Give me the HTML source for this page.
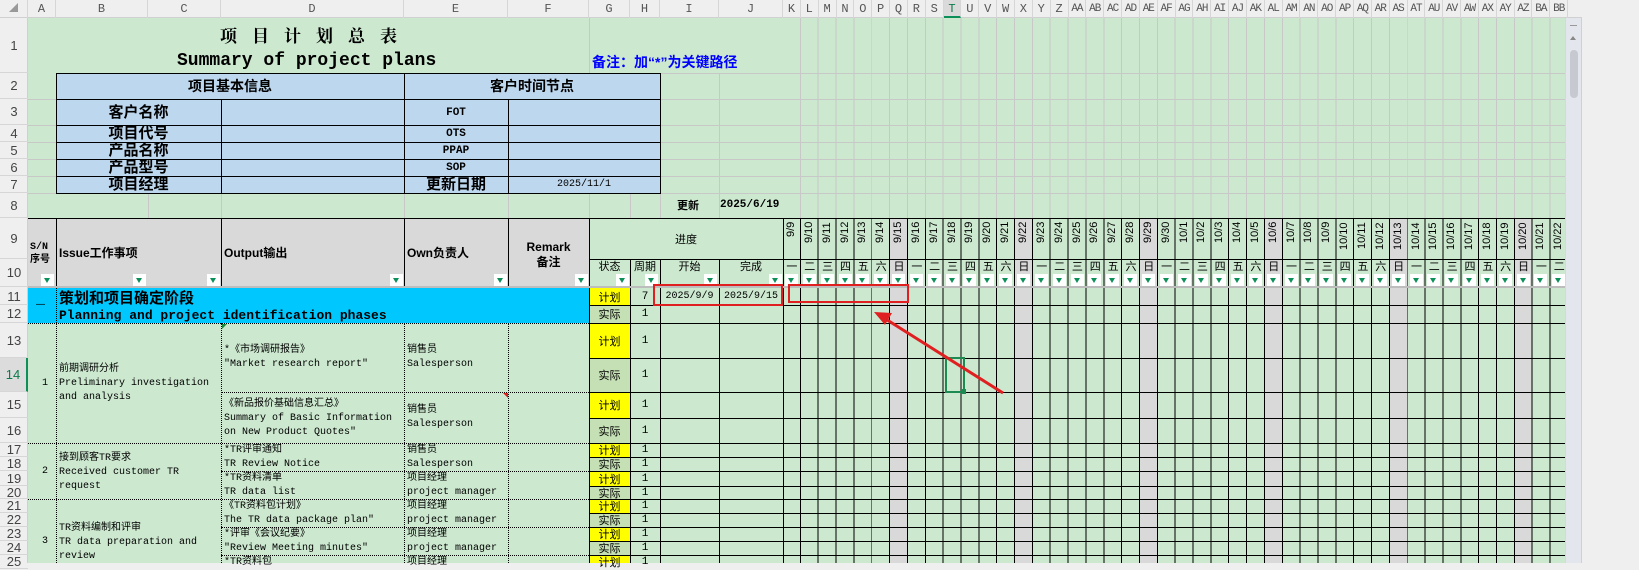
<!DOCTYPE html>
<html><head><meta charset="utf-8"><style>
*{box-sizing:border-box;margin:0;padding:0}
body{width:1639px;height:563px;overflow:hidden;background:#efefef;position:relative;font-family:"Liberation Mono","Noto Sans CJK SC",monospace;color:#000}
.a{position:absolute}
.hl{position:absolute;height:1px;background:#000}
.vl{position:absolute;width:1px;background:#000}
.gh{position:absolute;height:1px;background:#c8c8c8}
.gv{position:absolute;width:1px;background:#c8c8c8}
.dh{position:absolute;height:0;border-top:1px dotted #000}
.dv{position:absolute;width:0;border-left:1px dotted #000}
.t{position:absolute;white-space:nowrap;line-height:1}
.f{position:absolute;width:13px;height:12px;background:#fff}
.f:after{content:"";position:absolute;left:3px;top:4px;border-left:3.5px solid transparent;border-right:3.5px solid transparent;border-top:5px solid #0d8f5a}
.cl{position:absolute;top:0;height:18px;display:flex}
.cl span{display:block;text-align:center;font-size:12px;line-height:18px;color:#555;border-right:1px solid #d6d6d6;overflow:hidden}
.rh{position:absolute;left:0;width:28px;text-align:center;font-family:"Liberation Sans",sans-serif;font-size:13px;color:#444;border-bottom:1px solid #d6d6d6;display:flex;align-items:center;justify-content:center}
.dates{position:absolute;left:783px;top:219px;height:40px;display:flex}
.dates span{display:block;width:17.85px;height:40px;writing-mode:vertical-rl;transform:rotate(180deg);text-align:right;font-family:"Liberation Sans",sans-serif;font-size:11px;line-height:17px;padding-bottom:3px}
.wk{position:absolute;left:783px;top:260px;height:27px;display:flex}
.wk span{display:block;width:17.85px;height:27px;position:relative;text-align:center;font-family:"Liberation Sans","Noto Sans CJK SC",sans-serif;font-size:11px;line-height:14px}
.wk span i{position:absolute;left:2px;top:14px;width:13px;height:12px;background:#fff}
.wk span i:after{content:"";position:absolute;left:3px;top:4px;border-left:3.5px solid transparent;border-right:3.5px solid transparent;border-top:5px solid #0d8f5a}
.m{font-size:10px}
</style></head><body>

<!-- column header bar -->
<div class="a" style="left:0;top:0;width:1582px;height:18px;background:#efefef;border-bottom:1px solid #d0d0d0"></div>
<div class="cl" style="left:0"><span style="width:28px;color:#999;font-size:9px">◢</span><span style="width:28px">A</span><span style="width:92px">B</span><span style="width:73px">C</span><span style="width:183px">D</span><span style="width:104px">E</span><span style="width:81px">F</span><span style="width:41px">G</span><span style="width:30px">H</span><span style="width:59px">I</span><span style="width:64px">J</span></div>
<div class="cl" style="left:783px"><span style="width:17.85px">K</span><span style="width:17.85px">L</span><span style="width:17.85px">M</span><span style="width:17.85px">N</span><span style="width:17.85px">O</span><span style="width:17.85px">P</span><span style="width:17.85px">Q</span><span style="width:17.85px">R</span><span style="width:17.85px">S</span><span style="width:17.85px;color:#0d7a4a;background:#dadada;border-bottom:2px solid #0d8f5a">T</span><span style="width:17.85px">U</span><span style="width:17.85px">V</span><span style="width:17.85px">W</span><span style="width:17.85px">X</span><span style="width:17.85px">Y</span><span style="width:17.85px">Z</span><span style="width:17.85px;font-size:11px;letter-spacing:-1px">AA</span><span style="width:17.85px;font-size:11px;letter-spacing:-1px">AB</span><span style="width:17.85px;font-size:11px;letter-spacing:-1px">AC</span><span style="width:17.85px;font-size:11px;letter-spacing:-1px">AD</span><span style="width:17.85px;font-size:11px;letter-spacing:-1px">AE</span><span style="width:17.85px;font-size:11px;letter-spacing:-1px">AF</span><span style="width:17.85px;font-size:11px;letter-spacing:-1px">AG</span><span style="width:17.85px;font-size:11px;letter-spacing:-1px">AH</span><span style="width:17.85px;font-size:11px;letter-spacing:-1px">AI</span><span style="width:17.85px;font-size:11px;letter-spacing:-1px">AJ</span><span style="width:17.85px;font-size:11px;letter-spacing:-1px">AK</span><span style="width:17.85px;font-size:11px;letter-spacing:-1px">AL</span><span style="width:17.85px;font-size:11px;letter-spacing:-1px">AM</span><span style="width:17.85px;font-size:11px;letter-spacing:-1px">AN</span><span style="width:17.85px;font-size:11px;letter-spacing:-1px">AO</span><span style="width:17.85px;font-size:11px;letter-spacing:-1px">AP</span><span style="width:17.85px;font-size:11px;letter-spacing:-1px">AQ</span><span style="width:17.85px;font-size:11px;letter-spacing:-1px">AR</span><span style="width:17.85px;font-size:11px;letter-spacing:-1px">AS</span><span style="width:17.85px;font-size:11px;letter-spacing:-1px">AT</span><span style="width:17.85px;font-size:11px;letter-spacing:-1px">AU</span><span style="width:17.85px;font-size:11px;letter-spacing:-1px">AV</span><span style="width:17.85px;font-size:11px;letter-spacing:-1px">AW</span><span style="width:17.85px;font-size:11px;letter-spacing:-1px">AX</span><span style="width:17.85px;font-size:11px;letter-spacing:-1px">AY</span><span style="width:17.85px;font-size:11px;letter-spacing:-1px">AZ</span><span style="width:17.85px;font-size:11px;letter-spacing:-1px">BA</span><span style="width:17.85px;font-size:11px;letter-spacing:-1px">BB</span></div>

<!-- sheet background -->
<div class="a" style="left:28px;top:18px;width:1537px;height:545px;background:#cce8cf"></div>

<!-- row headers -->
<div class="a" style="left:0;top:18px;width:28px;height:545px;background:#efefef;border-right:1px solid #d0d0d0"></div>
<div class="rh" style="top:18px;height:55px">1</div>
<div class="rh" style="top:73px;height:26px">2</div>
<div class="rh" style="top:99px;height:26px">3</div>
<div class="rh" style="top:125px;height:17px">4</div>
<div class="rh" style="top:142px;height:17px">5</div>
<div class="rh" style="top:159px;height:17px">6</div>
<div class="rh" style="top:176px;height:17px">7</div>
<div class="rh" style="top:193px;height:25px">8</div>
<div class="rh" style="top:218px;height:41px">9</div>
<div class="rh" style="top:259px;height:28px">10</div>
<div class="rh" style="top:288px;height:17px">11</div>
<div class="rh" style="top:305px;height:18px">12</div>
<div class="rh" style="top:323px;height:35px">13</div>
<div class="rh" style="top:358px;height:34px;background:#dcdcdc;color:#0d7a4a;border-right:2px solid #0d8f5a">14</div>
<div class="rh" style="top:392px;height:26px">15</div>
<div class="rh" style="top:418px;height:25px">16</div>
<div class="rh" style="top:443px;height:14px">17</div>
<div class="rh" style="top:457px;height:14px">18</div>
<div class="rh" style="top:471px;height:15px">19</div>
<div class="rh" style="top:486px;height:13px">20</div>
<div class="rh" style="top:499px;height:14px">21</div>
<div class="rh" style="top:513px;height:14px">22</div>
<div class="rh" style="top:527px;height:14px">23</div>
<div class="rh" style="top:541px;height:14px">24</div>
<div class="rh" style="top:555px;height:14px">25</div>

<!-- light gridlines top area (K onward) -->
<div class="a" style="left:783px;top:18px;width:782px;height:200px;background:repeating-linear-gradient(90deg,transparent 0 16.85px,#c8c8c8 16.85px 17.85px)"></div>
<div class="gh" style="left:589px;top:73px;width:976px"></div>
<div class="gh" style="left:660px;top:99px;width:905px"></div>
<div class="gh" style="left:660px;top:125px;width:905px"></div>
<div class="gh" style="left:660px;top:142px;width:905px"></div>
<div class="gh" style="left:660px;top:159px;width:905px"></div>
<div class="gh" style="left:660px;top:176px;width:905px"></div>
<div class="gh" style="left:28px;top:193px;width:1537px"></div>
<div class="gh" style="left:28px;top:99px;width:28px"></div>
<div class="gh" style="left:28px;top:125px;width:28px"></div>
<div class="gh" style="left:28px;top:142px;width:28px"></div>
<div class="gh" style="left:28px;top:159px;width:28px"></div>
<div class="gh" style="left:28px;top:176px;width:28px"></div>
<div class="gv" style="left:148px;top:193px;height:25px"></div>
<div class="gv" style="left:221px;top:193px;height:25px"></div>
<div class="gv" style="left:404px;top:193px;height:25px"></div>
<div class="gv" style="left:508px;top:193px;height:25px"></div>
<div class="gv" style="left:589px;top:18px;height:200px"></div>
<div class="gv" style="left:630px;top:73px;height:145px"></div>
<div class="gv" style="left:660px;top:73px;height:145px"></div>
<div class="gv" style="left:719px;top:73px;height:145px"></div>

<!-- title -->
<div class="t" style="left:220px;top:26px;font-size:17px;font-weight:bold;letter-spacing:15px;font-family:'Noto Serif CJK SC','Noto Sans CJK SC',serif">项目计划总表</div>
<div class="t" style="left:177px;top:52px;font-size:18px;font-weight:bold">Summary of project plans</div>
<div class="t" style="left:592px;top:55px;font-size:14px;font-weight:bold;color:#0000ff;font-family:'Liberation Sans','Noto Sans CJK SC',sans-serif">备注：加“*”为关键路径</div>

<!-- blue table -->
<div class="a" style="left:56px;top:73px;width:605px;height:121px;background:#bdd7ee;border:1px solid #000"></div>
<div class="hl" style="left:56px;top:99px;width:605px"></div>
<div class="hl" style="left:56px;top:125px;width:605px"></div>
<div class="hl" style="left:56px;top:142px;width:605px"></div>
<div class="hl" style="left:56px;top:159px;width:605px"></div>
<div class="hl" style="left:56px;top:176px;width:605px"></div>
<div class="vl" style="left:221px;top:99px;height:95px"></div>
<div class="vl" style="left:404px;top:73px;height:121px"></div>
<div class="vl" style="left:508px;top:99px;height:95px"></div>
<div class="t" style="left:56px;width:348px;text-align:center;top:79px;font-size:14px;font-weight:bold;font-family:'Noto Sans CJK SC',sans-serif">项目基本信息</div>
<div class="t" style="left:404px;width:256px;text-align:center;top:79px;font-size:14px;font-weight:bold;font-family:'Noto Sans CJK SC',sans-serif">客户时间节点</div>
<div class="t" style="left:56px;width:165px;text-align:center;top:104px;font-size:15px;font-weight:bold;font-family:'Noto Sans CJK SC',sans-serif">客户名称</div>
<div class="t" style="left:56px;width:165px;text-align:center;top:125px;font-size:15px;font-weight:bold;font-family:'Noto Sans CJK SC',sans-serif">项目代号</div>
<div class="t" style="left:56px;width:165px;text-align:center;top:142px;font-size:15px;font-weight:bold;font-family:'Noto Sans CJK SC',sans-serif">产品名称</div>
<div class="t" style="left:56px;width:165px;text-align:center;top:159px;font-size:15px;font-weight:bold;font-family:'Noto Sans CJK SC',sans-serif">产品型号</div>
<div class="t" style="left:56px;width:165px;text-align:center;top:176px;font-size:15px;font-weight:bold;font-family:'Noto Sans CJK SC',sans-serif">项目经理</div>
<div class="t" style="left:404px;width:104px;text-align:center;top:108px;font-size:11px;font-weight:bold">FOT</div>
<div class="t" style="left:404px;width:104px;text-align:center;top:129px;font-size:11px;font-weight:bold">OTS</div>
<div class="t" style="left:404px;width:104px;text-align:center;top:146px;font-size:11px;font-weight:bold">PPAP</div>
<div class="t" style="left:404px;width:104px;text-align:center;top:163px;font-size:11px;font-weight:bold">SOP</div>
<div class="t" style="left:404px;width:104px;text-align:center;top:176px;font-size:15px;font-weight:bold;font-family:'Noto Sans CJK SC',sans-serif">更新日期</div>
<div class="t m" style="left:508px;width:152px;text-align:center;top:180px">2025/11/1</div>

<!-- row 8 -->
<div class="t" style="left:677px;top:200px;font-size:11px;font-weight:bold;font-family:'Noto Sans CJK SC',sans-serif">更新</div>
<div class="t" style="left:720px;top:200px;font-size:11px;font-weight:bold">2025/6/19</div>

<!-- header rows 9-10 -->
<div class="a" style="left:28px;top:218px;width:561px;height:69px;background:#d9d9d9"></div>
<div class="a" style="left:783px;top:218px;width:782px;height:345px;background:repeating-linear-gradient(90deg,transparent 0 16.85px,#000 16.85px 17.85px),repeating-linear-gradient(90deg,transparent 0 107.1px,#d9d9d9 107.1px 124.95px)"></div>
<div class="hl" style="left:28px;top:218px;width:1537px"></div>
<div class="hl" style="left:589px;top:259px;width:976px"></div>
<div class="vl" style="left:56px;top:218px;height:69px"></div>
<div class="vl" style="left:221px;top:218px;height:69px"></div>
<div class="vl" style="left:404px;top:218px;height:69px"></div>
<div class="vl" style="left:508px;top:218px;height:69px"></div>
<div class="vl" style="left:589px;top:218px;height:345px"></div>
<div class="vl" style="left:630px;top:259px;height:304px"></div>
<div class="vl" style="left:660px;top:259px;height:304px"></div>
<div class="vl" style="left:719px;top:259px;height:304px"></div>
<div class="vl" style="left:783px;top:218px;height:345px"></div>
<div class="t" style="left:30px;top:241px;font-size:10px;font-weight:bold;line-height:13px;font-family:'Liberation Mono','Noto Sans CJK SC',monospace">S/N<br>序号</div>
<div class="t" style="left:59px;top:247px;font-size:12px;font-weight:bold;font-family:'Liberation Sans','Noto Sans CJK SC',sans-serif">Issue工作事项</div>
<div class="t" style="left:224px;top:247px;font-size:12px;font-weight:bold;font-family:'Liberation Sans','Noto Sans CJK SC',sans-serif">Output输出</div>
<div class="t" style="left:407px;top:247px;font-size:12px;font-weight:bold;font-family:'Liberation Sans','Noto Sans CJK SC',sans-serif">Own负责人</div>
<div class="t" style="left:508px;width:81px;text-align:center;top:240px;font-size:12px;font-weight:bold;line-height:15px;font-family:'Liberation Sans','Noto Sans CJK SC',sans-serif">Remark<br>备注</div>
<div class="t" style="left:589px;width:194px;text-align:center;top:234px;font-size:11px;font-family:'Noto Sans CJK SC',sans-serif">进度</div>
<div class="t" style="left:589px;width:41px;text-align:center;top:261px;font-size:11px;font-family:'Noto Sans CJK SC',sans-serif">状态</div>
<div class="t" style="left:630px;width:30px;text-align:center;top:261px;font-size:11px;font-family:'Noto Sans CJK SC',sans-serif">周期</div>
<div class="t" style="left:660px;width:59px;text-align:center;top:261px;font-size:11px;font-family:'Noto Sans CJK SC',sans-serif">开始</div>
<div class="t" style="left:719px;width:64px;text-align:center;top:261px;font-size:11px;font-family:'Noto Sans CJK SC',sans-serif">完成</div>
<div class="f" style="left:41px;top:274px"></div>
<div class="f" style="left:133px;top:274px"></div>
<div class="f" style="left:207px;top:274px"></div>
<div class="f" style="left:390px;top:274px"></div>
<div class="f" style="left:494px;top:274px"></div>
<div class="f" style="left:575px;top:274px"></div>
<div class="f" style="left:616px;top:274px"></div>
<div class="f" style="left:645px;top:274px"></div>
<div class="f" style="left:704px;top:274px"></div>
<div class="f" style="left:769px;top:274px"></div>

<div class="dates"><span>9/9</span><span>9/10</span><span>9/11</span><span>9/12</span><span>9/13</span><span>9/14</span><span>9/15</span><span>9/16</span><span>9/17</span><span>9/18</span><span>9/19</span><span>9/20</span><span>9/21</span><span>9/22</span><span>9/23</span><span>9/24</span><span>9/25</span><span>9/26</span><span>9/27</span><span>9/28</span><span>9/29</span><span>9/30</span><span>10/1</span><span>10/2</span><span>10/3</span><span>10/4</span><span>10/5</span><span>10/6</span><span>10/7</span><span>10/8</span><span>10/9</span><span>10/10</span><span>10/11</span><span>10/12</span><span>10/13</span><span>10/14</span><span>10/15</span><span>10/16</span><span>10/17</span><span>10/18</span><span>10/19</span><span>10/20</span><span>10/21</span><span>10/22</span></div>
<div class="wk"><span>一<i></i></span><span>二<i></i></span><span>三<i></i></span><span>四<i></i></span><span>五<i></i></span><span>六<i></i></span><span>日<i></i></span><span>一<i></i></span><span>二<i></i></span><span>三<i></i></span><span>四<i></i></span><span>五<i></i></span><span>六<i></i></span><span>日<i></i></span><span>一<i></i></span><span>二<i></i></span><span>三<i></i></span><span>四<i></i></span><span>五<i></i></span><span>六<i></i></span><span>日<i></i></span><span>一<i></i></span><span>二<i></i></span><span>三<i></i></span><span>四<i></i></span><span>五<i></i></span><span>六<i></i></span><span>日<i></i></span><span>一<i></i></span><span>二<i></i></span><span>三<i></i></span><span>四<i></i></span><span>五<i></i></span><span>六<i></i></span><span>日<i></i></span><span>一<i></i></span><span>二<i></i></span><span>三<i></i></span><span>四<i></i></span><span>五<i></i></span><span>六<i></i></span><span>日<i></i></span><span>一<i></i></span><span>二<i></i></span></div>

<!-- freeze separator -->
<div class="a" style="left:28px;top:286px;width:1537px;height:2px;background:#bdbdbd"></div>

<!-- rows 11-12 cyan -->
<div class="a" style="left:28px;top:288px;width:561px;height:35px;background:#00c8ff"></div>
<div class="dv" style="left:56px;top:288px;height:275px"></div>
<div class="t" style="left:36px;top:292px;font-size:15px;font-weight:bold">_</div>
<div class="t" style="left:59px;top:290px;font-size:15px;font-weight:bold;font-family:'Noto Sans CJK SC',sans-serif">策划和项目确定阶段</div>
<div class="t" style="left:59px;top:309px;font-size:13px;font-weight:bold">Planning and project identification phases</div>

<!-- G column status cells -->
<div class="a" style="left:590px;top:288px;width:40px;height:17px;background:#ffff00"></div>
<div class="a" style="left:590px;top:305px;width:40px;height:18px;background:#c5e0b4"></div>
<div class="a" style="left:590px;top:323px;width:40px;height:35px;background:#ffff00"></div>
<div class="a" style="left:590px;top:358px;width:40px;height:34px;background:#c5e0b4"></div>
<div class="a" style="left:590px;top:392px;width:40px;height:26px;background:#ffff00"></div>
<div class="a" style="left:590px;top:418px;width:40px;height:25px;background:#c5e0b4"></div>
<div class="a" style="left:590px;top:443px;width:40px;height:14px;background:#ffff00"></div>
<div class="a" style="left:590px;top:457px;width:40px;height:14px;background:#c5e0b4"></div>
<div class="a" style="left:590px;top:471px;width:40px;height:15px;background:#ffff00"></div>
<div class="a" style="left:590px;top:486px;width:40px;height:13px;background:#c5e0b4"></div>
<div class="a" style="left:590px;top:499px;width:40px;height:14px;background:#ffff00"></div>
<div class="a" style="left:590px;top:513px;width:40px;height:14px;background:#c5e0b4"></div>
<div class="a" style="left:590px;top:527px;width:40px;height:14px;background:#ffff00"></div>
<div class="a" style="left:590px;top:541px;width:40px;height:14px;background:#c5e0b4"></div>
<div class="a" style="left:590px;top:555px;width:40px;height:8px;background:#ffff00"></div>

<!-- horizontal black lines G onward -->
<div class="hl" style="left:589px;top:305px;width:976px"></div>
<div class="hl" style="left:589px;top:323px;width:976px"></div>
<div class="hl" style="left:589px;top:358px;width:976px"></div>
<div class="hl" style="left:589px;top:392px;width:976px"></div>
<div class="hl" style="left:589px;top:418px;width:976px"></div>
<div class="hl" style="left:589px;top:443px;width:976px"></div>
<div class="hl" style="left:589px;top:457px;width:976px"></div>
<div class="hl" style="left:589px;top:471px;width:976px"></div>
<div class="hl" style="left:589px;top:486px;width:976px"></div>
<div class="hl" style="left:589px;top:499px;width:976px"></div>
<div class="hl" style="left:589px;top:513px;width:976px"></div>
<div class="hl" style="left:589px;top:527px;width:976px"></div>
<div class="hl" style="left:589px;top:541px;width:976px"></div>
<div class="hl" style="left:589px;top:555px;width:976px"></div>

<!-- G/H texts -->
<div style="position:absolute;left:589px;top:288px;width:71px;font-family:'Liberation Mono','Noto Sans CJK SC',monospace;font-size:11px">
<div style="display:flex;height:17px;align-items:center"><span style="width:41px;text-align:center">计划</span><span style="width:30px;text-align:center">7</span></div>
<div style="display:flex;height:18px;align-items:center"><span style="width:41px;text-align:center">实际</span><span style="width:30px;text-align:center">1</span></div>
<div style="display:flex;height:35px;align-items:center"><span style="width:41px;text-align:center">计划</span><span style="width:30px;text-align:center">1</span></div>
<div style="display:flex;height:34px;align-items:center"><span style="width:41px;text-align:center">实际</span><span style="width:30px;text-align:center">1</span></div>
<div style="display:flex;height:26px;align-items:center"><span style="width:41px;text-align:center">计划</span><span style="width:30px;text-align:center">1</span></div>
<div style="display:flex;height:25px;align-items:center"><span style="width:41px;text-align:center">实际</span><span style="width:30px;text-align:center">1</span></div>
<div style="display:flex;height:14px;align-items:center"><span style="width:41px;text-align:center">计划</span><span style="width:30px;text-align:center">1</span></div>
<div style="display:flex;height:14px;align-items:center"><span style="width:41px;text-align:center">实际</span><span style="width:30px;text-align:center">1</span></div>
<div style="display:flex;height:15px;align-items:center"><span style="width:41px;text-align:center">计划</span><span style="width:30px;text-align:center">1</span></div>
<div style="display:flex;height:13px;align-items:center"><span style="width:41px;text-align:center">实际</span><span style="width:30px;text-align:center">1</span></div>
<div style="display:flex;height:14px;align-items:center"><span style="width:41px;text-align:center">计划</span><span style="width:30px;text-align:center">1</span></div>
<div style="display:flex;height:14px;align-items:center"><span style="width:41px;text-align:center">实际</span><span style="width:30px;text-align:center">1</span></div>
<div style="display:flex;height:14px;align-items:center"><span style="width:41px;text-align:center">计划</span><span style="width:30px;text-align:center">1</span></div>
<div style="display:flex;height:14px;align-items:center"><span style="width:41px;text-align:center">实际</span><span style="width:30px;text-align:center">1</span></div>
<div style="display:flex;height:14px;align-items:center"><span style="width:41px;text-align:center">计划</span><span style="width:30px;text-align:center">1</span></div>
</div>
<div class="t m" style="left:660px;width:59px;text-align:center;top:292px">2025/9/9</div>
<div class="t m" style="left:719px;width:64px;text-align:center;top:292px">2025/9/15</div>

<!-- left data area dotted borders -->
<div class="dh" style="left:28px;top:323px;width:561px"></div>
<div class="dh" style="left:28px;top:443px;width:561px"></div>
<div class="dh" style="left:28px;top:499px;width:561px"></div>
<div class="dh" style="left:221px;top:392px;width:368px"></div>
<div class="dh" style="left:221px;top:471px;width:368px"></div>
<div class="dh" style="left:221px;top:527px;width:368px"></div>
<div class="dh" style="left:221px;top:555px;width:368px"></div>
<div class="dv" style="left:221px;top:323px;height:240px"></div>
<div class="dv" style="left:404px;top:323px;height:240px"></div>
<div class="dv" style="left:508px;top:323px;height:240px"></div>
<div class="a" style="left:222px;top:324px;border-top:5px solid #1a8a3a;border-right:5px solid transparent"></div>
<div class="a" style="left:503px;top:393px;border-top:5px solid #e02020;border-left:5px solid transparent"></div>

<div class="a" style="font-family:'Liberation Mono','Noto Sans CJK SC',monospace;font-size:10px;line-height:14px;white-space:nowrap">
<div class="a" style="left:42px;top:377px">1</div>
<div class="a" style="left:59px;top:363px">前期调研分析<br>Preliminary investigation<br>and analysis</div>
<div class="a" style="left:224px;top:344px">*《市场调研报告》<br>"Market research report"</div>
<div class="a" style="left:407px;top:344px">销售员<br>Salesperson</div>
<div class="a" style="left:224px;top:398px">《新品报价基础信息汇总》<br>Summary of Basic Information<br>on New Product Quotes"</div>
<div class="a" style="left:407px;top:404px">销售员<br>Salesperson</div>
<div class="a" style="left:42px;top:465px">2</div>
<div class="a" style="left:59px;top:452px">接到顾客TR要求<br>Received customer TR<br>request</div>
<div class="a" style="left:224px;top:444px">*TR评审通知<br>TR Review Notice</div>
<div class="a" style="left:407px;top:444px">销售员<br>Salesperson</div>
<div class="a" style="left:224px;top:472px">*TR资料清单<br>TR data list</div>
<div class="a" style="left:407px;top:472px">项目经理<br>project manager</div>
<div class="a" style="left:42px;top:535px">3</div>
<div class="a" style="left:59px;top:522px">TR资料编制和评审<br>TR data preparation and<br>review</div>
<div class="a" style="left:224px;top:500px">《TR资料包计划》<br>The TR data package plan"</div>
<div class="a" style="left:407px;top:500px">项目经理<br>project manager</div>
<div class="a" style="left:224px;top:528px">*评审《会议纪要》<br>"Review Meeting minutes"</div>
<div class="a" style="left:407px;top:528px">项目经理<br>project manager</div>
<div class="a" style="left:224px;top:556px">*TR资料包</div>
<div class="a" style="left:407px;top:556px">项目经理</div>
</div>

<!-- annotations -->
<div class="a" style="left:653px;top:284px;width:130px;height:22px;border:2px solid #e02020"></div>
<div class="a" style="left:788px;top:284px;width:121px;height:19px;border:2px solid #e02020"></div>
<div class="a" style="left:945px;top:357px;width:20px;height:36px;border:2px solid #1d8a52"></div>
<div class="a" style="left:961px;top:389px;width:5px;height:5px;background:#1d8a52"></div>
<svg class="a" style="left:0;top:0" width="1639" height="563"><line x1="1003" y1="393" x2="884" y2="318" stroke="#e02020" stroke-width="3"/><polygon points="874,312 892,313 885,325" fill="#e02020"/></svg>

<!-- scrollbar -->
<div class="a" style="left:1565px;top:18px;width:17px;height:545px;background:#e3e6ec;border-left:1px solid #d8d8d8;border-right:1px solid #d0d0d0"></div>
<div class="a" style="left:1570px;top:25px;width:7px;height:1px;background:#999"></div>
<div class="a" style="left:1570px;top:36px;border-left:3px solid transparent;border-right:3px solid transparent;border-bottom:4px solid #888"></div>
<div class="a" style="left:1570px;top:50px;width:8px;height:48px;background:#c6c9cf;border-radius:4px"></div>
</body></html>
